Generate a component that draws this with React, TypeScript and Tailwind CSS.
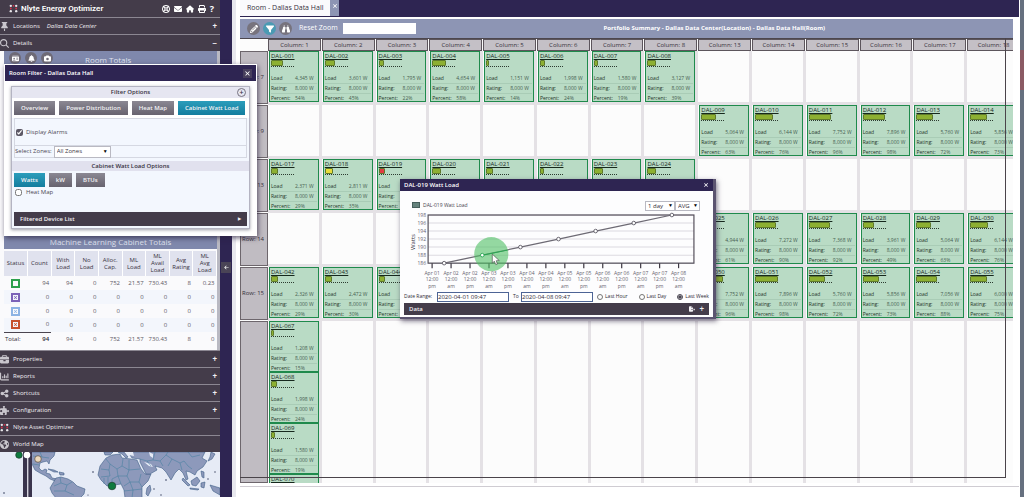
import { useState } from "react";
import type { ReactNode } from "react";
import {
  FaArrowLeft,
  FaBell,
  FaBinoculars,
  FaCamera,
  FaEnvelope,
  FaFileExport,
  FaFilter,
  FaHouse,
  FaIdCard,
  FaLifeRing,
  FaPencil,
  FaPrint,
  FaPuzzlePiece,
  FaBriefcase,
  FaEarthAmericas,
  FaMagnifyingGlass,
  FaChartColumn,
  FaShareNodes,
  FaThumbtack,
  FaXmark,
} from "react-icons/fa6";

interface Cabinet {
  id: string;
  load: string;
  percent: number;
  color?: string;
}

const cab = (id: string, load: string, percent: number, color?: string): Cabinet => ({ id, load, percent, color });

const columns = [1, 2, 3, 4, 5, 6, 7, 8, 13, 14, 15, 16, 17, 18];

const rows: { label: string; cabinets: Record<number, Cabinet> }[] = [
  {
    label: "Row: 7",
    cabinets: {
      1: cab("DAL-001", "4,345", 54),
      2: cab("DAL-002", "3,601", 45),
      3: cab("DAL-003", "1,795", 22),
      4: cab("DAL-004", "4,654", 58),
      5: cab("DAL-005", "1,151", 14),
      6: cab("DAL-006", "1,998", 24),
      7: cab("DAL-007", "1,580", 19),
      8: cab("DAL-008", "3,127", 39),
    },
  },
  {
    label: "Row: 9",
    cabinets: {
      13: cab("DAL-009", "5,064", 63),
      14: cab("DAL-010", "6,144", 76),
      15: cab("DAL-011", "7,752", 96),
      16: cab("DAL-012", "7,896", 98),
      17: cab("DAL-013", "5,760", 72),
      18: cab("DAL-014", "5,856", 73),
    },
  },
  {
    label: "Row: 13",
    cabinets: {
      1: cab("DAL-017", "2,371", 29),
      2: cab("DAL-018", "2,811", 35, "bg-[#e8dc3c]"),
      3: cab("DAL-019", "2,326", 29, "bg-[#e23c42]"),
      4: cab("DAL-020", "3,127", 39),
      5: cab("DAL-021", "2,326", 29),
      6: cab("DAL-022", "1,580", 19),
      7: cab("DAL-023", "3,127", 39),
      8: cab("DAL-024", "2,811", 35),
    },
  },
  {
    label: "Row: 14",
    cabinets: {
      13: cab("DAL-025", "4,944", 61),
      14: cab("DAL-026", "7,272", 90),
      15: cab("DAL-027", "7,368", 92),
      16: cab("DAL-028", "3,961", 49),
      17: cab("DAL-029", "5,064", 63),
      18: cab("DAL-030", "6,144", 76),
    },
  },
  {
    label: "Row: 15",
    cabinets: {
      1: cab("DAL-042", "2,326", 29),
      2: cab("DAL-043", "2,472", 30),
      3: cab("DAL-044", "2,472", 30),
      13: cab("DAL-050", "7,752", 96),
      14: cab("DAL-051", "7,896", 98),
      15: cab("DAL-052", "5,760", 72),
      16: cab("DAL-053", "5,856", 73),
      17: cab("DAL-054", "7,056", 88),
      18: cab("DAL-055", "6,000", 75),
    },
  },
];

const stacked = [
  cab("DAL-067", "1,208", 15),
  cab("DAL-068", "1,998", 24),
  cab("DAL-069", "1,580", 19),
  cab("DAL-070", "3,127", 39),
];

const CabinetCard = ({ cabinet }: { cabinet: Cabinet }) => (
  <div className="h-[51px] overflow-hidden border border-[#1f8a4c] bg-[#b9dbc5] px-px text-[5px] leading-[9px] text-[#1d3326]">
    <a href={`#${cabinet.id}`} className="block text-[6px] leading-[8px] text-[#16281d] underline">
      {cabinet.id}
    </a>
    <div className="h-[7px] w-[23px] border-b border-dotted border-[#2c3b30]">
      <div
        className={`h-[6px] rounded-[1px] border border-[#5f7a2c] ${cabinet.color ?? "bg-[#8db032]"}`}
        style={{ width: `${cabinet.percent}%` }}
      />
    </div>
    <dl className="mt-[7px] grid grid-cols-[24px_1fr] whitespace-nowrap">
      <dt className="border-b border-[#a9ccb6]">Load</dt>
      <dd className="border-b border-[#a9ccb6] text-[#466050]">{cabinet.load} W</dd>
      <dt className="border-b border-[#a9ccb6]">Rating:</dt>
      <dd className="border-b border-[#a9ccb6] text-[#466050]">8,000 W</dd>
      <dt className="leading-[8px]">Percent:</dt>
      <dd className="leading-[8px] text-[#466050]">{cabinet.percent}%</dd>
    </dl>
  </div>
);

const RowHeader = ({ label, tall }: { label: string; tall?: boolean }) => (
  <div
    className={`flex w-[28px] shrink-0 items-center justify-end border border-[#6d666c] bg-[#c0bcc2] pr-[3px] text-[6px] font-medium whitespace-nowrap text-[#35303a] ${tall ? "" : "mb-px h-[53px]"}`}
  >
    {label}
  </div>
);

const RoomPlan = () => (
  <div className="relative min-h-0 flex-1 overflow-hidden bg-[#fcfcfc]">
    <div className="flex h-full w-[781px] flex-col">
      <div className="flex h-[13px] shrink-0 border-t border-[#4d474e]">
        <div className="w-[28px] shrink-0" />
        <div className="grid flex-1 grid-cols-14">
          {columns.map((c) => (
            <div
              key={c}
              className="mr-px border border-[#5c555c] bg-[#c4c0c6] text-center text-[6px] leading-[10px] font-medium text-[#38323c]"
            >
              Column: {c}
            </div>
          ))}
        </div>
      </div>
      {rows.map((row) => (
        <div key={row.label} className="flex h-[54px] shrink-0">
          <RowHeader label={row.label} />
          <div className="grid flex-1 grid-cols-14">
            {columns.map((c) => (
              <div key={c} className="border-r-3 border-b-3 border-[#e4e1e5] pl-px">
                {row.cabinets[c] && <CabinetCard cabinet={row.cabinets[c]} />}
              </div>
            ))}
          </div>
        </div>
      ))}
      <div className="flex min-h-0 flex-1">
        <RowHeader label="" tall />
        <div className="grid flex-1 grid-cols-14">
          {columns.map((c) => (
            <div key={c} className="border-r-3 border-[#e4e1e5] pl-px">
              {c === 1 && stacked.map((s) => <CabinetCard key={s.id} cabinet={s} />)}
            </div>
          ))}
        </div>
      </div>
    </div>
    {/* room outline */}
    <div className="pointer-events-none absolute top-0 right-[7px] bottom-[5px] left-0 border-r border-b border-[#4a444a]" />
  </div>
);

const SectionBar = ({ icon, label, sign, extra }: { icon: ReactNode; label: string; sign?: string; extra?: string }) => (
  <button className="flex h-[17px] w-full shrink-0 items-center border-t border-[#8c8792] bg-[#443c4a] pr-[3px] text-left text-[6px] font-medium text-[#f1eff3]">
    <span className="flex w-[13px] shrink-0 text-[9px] text-[#c9c6cd]">{icon}</span>
    {label}
    {extra && <em className="ml-[7px]">{extra}</em>}
    <span className="ml-auto text-[8px] font-bold">{sign}</span>
  </button>
);

const NlyteMark = () => (
  <svg viewBox="0 0 10 10" className="size-[9px]">
    <g fill="#e9e7ec">
      <circle cx="2" cy="2" r="1.3" />
      <circle cx="8" cy="2" r="1.3" />
      <circle cx="2" cy="8" r="1.3" />
      <circle cx="8" cy="8" r="1.3" />
    </g>
    <circle cx="2" cy="5" r="1" fill="#d8344b" />
    <circle cx="5" cy="2" r="1" fill="#d8344b" />
    <circle cx="8" cy="5" r="1" fill="#d8344b" />
  </svg>
);

const totals: { status: string; values: string[] }[] = [
  { status: "border-[#2da04c] text-transparent", values: ["94", "94", "0", "752", "21.57", "730.43", "8", "0.23"] },
  { status: "border-[#7c63b8] text-[#7c63b8]", values: ["0", "0", "0", "0", "0", "0", "0", "0"] },
  { status: "border-[#8db4e4] text-[#8db4e4]", values: ["0", "0", "0", "0", "0", "0", "0", "0"] },
  { status: "border-[#c8502c] text-[#c8502c]", values: ["0", "0", "0", "0", "0", "0", "0", "0"] },
];

const TotalsTable = () => (
  <table className="w-full table-fixed text-[6px] text-[#5b5763]">
    <thead>
      <tr className="h-[25px] bg-[#e0e2ee] text-[#38323f]">
        {["Status", "Count", "With Load", "No Load", "Alloc. Cap.", "ML Load", "ML Avail Load", "Avg Rating", "ML Avg Load"].map((h) => (
          <th key={h} className="border-r border-white px-[2px] text-center leading-[7px] font-medium">
            {h}
          </th>
        ))}
      </tr>
    </thead>
    <tbody>
      {totals.map((t) => (
        <tr key={t.status} className="h-[14px] even:bg-[#f3f6fc]">
          <td>
            <span className={`ml-[7px] flex size-[9px] items-center justify-center border-2 ${t.status}`}>
              <FaXmark className="size-[5px]" />
            </span>
          </td>
          {t.values.map((v, i) => (
            <td key={i} className="pr-[2px] text-right">
              {v}
            </td>
          ))}
        </tr>
      ))}
      <tr className="h-[15px]">
        <td className="border-t border-[#4b4550] pl-px font-medium text-[#2e2936]">Total:</td>
        <td className="border-t border-[#4b4550] pr-[2px] text-right font-semibold text-[#2e2936]">94</td>
        {["94", "0", "752", "21.57", "730.43", "8", "0"].map((v, i) => (
          <td key={i} className="pr-[2px] text-right">
            {v}
          </td>
        ))}
      </tr>
    </tbody>
  </table>
);

const WorldMap = () => (
  <svg viewBox="0 0 220 45" preserveAspectRatio="xMidYMin slice" className="min-h-0 w-full flex-1 bg-[#e6ebf6]">
    <g fill="#8d99bb" stroke="#3f5f86" strokeWidth="0.6" strokeLinejoin="round">
      {/* north and central america */}
      <path d="M29 0H55L54 4L50 8L49 12L47 9L43 10L40 11L39 16L42 19L45 17L47 18L46 21L50 22L52 26L57 27L55 29L50 27L46 24L40 21L35 18L32 12L29 6Z" />
      <path d="M48 17L54 18L58 20L54 20ZM59 20L64 21L64 23L60 23Z" />
      {/* south america */}
      <path d="M56 26L61 25L68 27L73 30L77 34L85 37L84 42L80 46H56L52 41L50 36L53 31Z" />
      {/* africa */}
      <path d="M106 6L112 3L120 2L122 6L131 7L137 8L141 17L145 22L151 22L148 29L142 35L142 46H125L124 38L121 32L114 33L107 34L101 28L98 23L100 14Z" />
      <path d="M147 36L150 33L151 38L148 44L146 42Z" />
      {/* europe and asia */}
      <path d="M104 0H113L110 3L105 3ZM118 0L124 0L128 5L126 6L122 2ZM128 0H205L202 6L207 9L203 15L197 19L195 23L190 20L186 19L188 27L186 28L183 21L179 17L175 21L171 28L166 20L162 16L155 14L157 18L150 22L146 22L140 10L140 7L132 6Z" />
      <path d="M183 26L190 33L188 34L182 28ZM191 29L197 25L200 29L196 34L192 33ZM190 36L199 37L198 38L190 37ZM201 31L205 30L204 36L201 35ZM210 33L220 36V43L213 39ZM211 0L215 2L212 7L208 9L210 5ZM201 19L204 20L204 26L202 25Z" />
    </g>
    <g fill="#e6ebf6">
      <path d="M126 0H133L134 4L129 3ZM149 0L153 2L153 6L150 4ZM144 10L149 14L153 15L151 12Z" />
    </g>
    <g fill="none" stroke="#3f7c9c" strokeWidth="0.5">
      <path d="M106 7L110 12L117 17L122 14L123 7M122 14L129 18V8M129 18L140 17M101 17L109 18L110 12M109 18L110 24L101 25M117 17L118 24L112 27V33M118 24L127 24L129 18M127 24L130 30L139 30L141 22M130 30L124 34M118 24L121 32M130 30L133 38L142 37M124 39L133 38L132 46M139 30L142 35M104 26V32M108 25V34" />
      <path d="M140 7L147 9L153 8L160 9L163 14M153 8L155 0M160 9L166 3L172 7L180 11L184 9M166 3L168 0M172 7L168 14M180 11L182 18M184 9L188 14L192 17M188 0L192 5L200 3M147 9L151 14" />
      <path d="M60 25L61 31L67 33L72 30M61 31L54 34M67 33L65 39L74 43M54 39L65 39" />
      <path d="M33 12L39 13M40 0L42 5L49 6M33 4L42 5" />
    </g>
    <g fill="#2d3554">
      <circle cx="4" cy="41" r="0.8" />
      <circle cx="93" cy="20" r="0.8" />
      <circle cx="88" cy="43" r="0.6" />
      <circle cx="166" cy="28" r="0.8" />
      <circle cx="154" cy="37" r="0.7" />
      <circle cx="161" cy="43" r="0.7" />
      <circle cx="215" cy="20" r="0.7" />
      <circle cx="208" cy="27" r="0.7" />
    </g>
    {/* zoom slider */}
    <rect x="23" y="0" width="9" height="45" fill="#3a344c" />
    <rect x="27" y="0" width="1.4" height="45" fill="#d6d4de" />
    <circle cx="19" cy="3" r="3.3" fill="#0e7a3e" stroke="#1c3b2c" strokeWidth="0.7" />
    <circle cx="27" cy="3" r="3.3" fill="#fff" />
    <circle cx="38" cy="7" r="3.3" fill="#ecd9bd" stroke="#55493f" strokeWidth="0.7" />
    <circle cx="112" cy="34" r="3.8" fill="#0e7a3e" stroke="#1c3b2c" strokeWidth="0.7" />
  </svg>
);

const Sidebar = () => (
  <aside className="flex w-[232px] shrink-0 bg-[#2e2552]">
    <div className="flex w-[220px] shrink-0 flex-col">
      <header className="flex h-[17px] shrink-0 items-center bg-[#443c4a] pl-[9px] text-white">
        <NlyteMark />
        <h1 className="ml-[3px] font-[Roboto,sans-serif] text-[8px] leading-[14px] font-semibold whitespace-nowrap">
          Nlyte Energy Optimizer
        </h1>
        <nav className="mr-[6px] ml-auto flex items-center gap-[4px] text-[8px]">
          <button aria-label="Support"><FaLifeRing /></button>
          <button aria-label="Mail"><FaEnvelope /></button>
          <button aria-label="Home"><FaHouse /></button>
          <button aria-label="Print"><FaPrint /></button>
          <button aria-label="Help" className="text-[9px] leading-[9px] font-bold">?</button>
        </nav>
      </header>
      <SectionBar icon={<FaThumbtack />} label="Locations" extra="Dallas Data Center" sign="+" />
      <SectionBar icon={<FaMagnifyingGlass />} label="Details" sign="−" />
      <div className="flex shrink-0 basis-[299px] flex-col border-r-3 border-[#b9b9c2] bg-[#fafafc] pl-[4px]">
        <div className="flex h-[184px] shrink-0">
          <div className="flex h-[14px] w-full items-center bg-[#7f88ac] pl-[5px] text-white">
            <div className="flex gap-[4px] text-[7px]">
              <span className="flex size-[12px] items-center justify-center rounded-full bg-[#6e6a76]"><FaIdCard /></span>
              <span className="flex size-[12px] items-center justify-center rounded-full bg-[#6e6a76]"><FaBell /></span>
              <span className="flex size-[12px] items-center justify-center rounded-full bg-[#6e6a76]"><FaCamera /></span>
            </div>
            <h2 className="mt-[4px] ml-[32px] text-[8px] text-[#dfe2ee]">Room Totals</h2>
          </div>
        </div>
        <h2 className="mb-[2px] h-[14px] shrink-0 bg-[#7f88ac] text-center text-[8px] leading-[14px] text-[#dfe2ee]">
          Machine Learning Cabinet Totals
        </h2>
        <TotalsTable />
      </div>
      <SectionBar icon={<FaBriefcase />} label="Properties" sign="+" />
      <SectionBar icon={<FaChartColumn />} label="Reports" sign="+" />
      <SectionBar icon={<FaShareNodes />} label="Shortcuts" sign="+" />
      <SectionBar icon={<FaPuzzlePiece />} label="Configuration" sign="+" />
      <SectionBar icon={<NlyteMark />} label="Nlyte Asset Optimizer" />
      <SectionBar icon={<FaEarthAmericas />} label="World Map" />
      <WorldMap />
    </div>
    <button aria-label="Collapse sidebar" className="mt-[262px] ml-px flex h-[11px] w-[10px] items-center justify-center bg-[#4a4456] text-[5px] text-white">
      <FaArrowLeft />
    </button>
  </aside>
);

const PillButton = ({ label, active, onClick }: { label: string; active?: boolean; onClick?: () => void }) => (
  <button
    onClick={onClick}
    className={`h-[14px] px-[7px] text-[6px] font-semibold whitespace-nowrap text-[#f3f3f6] ${
      active ? "bg-linear-to-b from-[#2b9dbb] to-[#137d9e]" : "bg-linear-to-b from-[#8b8893] to-[#67636f]"
    }`}
  >
    {label}
  </button>
);

const RoomFilter = () => {
  const [tab, setTab] = useState("Cabinet Watt Load");
  const [unit, setUnit] = useState("Watts");

  return (
    <section className="absolute top-[64px] left-[4px] w-[253px] border border-white bg-white pb-[6px] shadow-[1px_2px_5px_rgba(40,30,60,0.7)]">
      <div className="flex h-[16px] items-center bg-[#2e2552] px-[4px] text-[6px] font-semibold text-white">
        <h2>Room Filter - Dallas Data Hall</h2>
        <button aria-label="Close filter" className="ml-auto bg-[#473f5c] p-px text-[7px]"><FaXmark /></button>
      </div>
      <div className="mx-[6px] mt-[5px] border border-[#b4b4c2] bg-[#f3f7fe] pb-[2px] text-[6px] text-[#4c4854] shadow-[0_1px_3px_rgba(60,60,80,0.5)]">
        <div className="relative h-[11px] bg-[#e6e6f1] text-center leading-[11px] font-semibold text-[#37323f]">
          Filter Options
          <button aria-label="Reset filters" className="absolute top-px right-[3px] size-[9px] rounded-full border border-[#777380] text-[7px] leading-[6px]">+</button>
        </div>
        <div className="flex gap-[4px] bg-white px-[2px] py-[3px]">
          {["Overview", "Power Distribution", "Heat Map", "Cabinet Watt Load"].map((t) => (
            <PillButton key={t} label={t} active={tab === t} onClick={() => setTab(t)} />
          ))}
        </div>
        <div className="mx-[2px] border border-[#d5d8e2]">
          <label className="flex h-[26px] items-center gap-[3px] pl-px">
            <input type="checkbox" defaultChecked className="size-[7px] accent-[#5c5866]" />
            Display Alarms
          </label>
          <div className="flex h-[12px] items-center gap-[2px] border-t border-[#d5d8e2]">
            <label htmlFor="zones">Select Zones:</label>
            <div className="relative">
              <select id="zones" className="block h-[12px] w-[57px] appearance-none border border-[#b9b9c2] bg-white pl-[2px] text-[6px] text-[#3a3642]">
                <option>All Zones</option>
              </select>
              <span className="pointer-events-none absolute top-[2px] right-[3px] text-[5px] leading-[7px] text-black">▼</span>
            </div>
          </div>
        </div>
        <h3 className="mt-[3px] h-[10px] bg-[#e1e1ee] text-center leading-[10px] font-semibold text-[#37323f]">Cabinet Watt Load Options</h3>
        <div className="flex gap-[4px] px-[2px] pt-[2px]">
          {["Watts", "kW", "BTUs"].map((u) => (
            <PillButton key={u} label={u} active={unit === u} onClick={() => setUnit(u)} />
          ))}
        </div>
        <label className="flex h-[11px] items-center gap-[4px] pl-[3px]">
          <input type="checkbox" className="size-[7px]" />
          Heat Map
        </label>
        <div className="mt-[14px] px-[2px]">
          <button className="flex h-[14px] w-full items-center justify-between bg-[#443c4a] px-[6px] font-semibold text-[#f1eff3]">
            Filtered Device List
            <span className="text-[4px]">▶</span>
          </button>
        </div>
      </div>
    </section>
  );
};

const points = [
  [445, 262],
  [483, 254],
  [521, 246],
  [559, 238],
  [596, 230],
  [634, 222],
  [672, 214],
];

const days = ["01", "02", "02", "03", "03", "04", "04", "05", "05", "06", "06", "07", "07", "08"];

const LoadChart = () => (
  <svg viewBox="405 210 304 80" className="block w-full text-[5px]" fill="#66636e">
    {[198, 196, 194, 192, 190, 188, 186].map((v, i) => (
      <g key={v}>
        <line x1="429" x2="694" y1={214 + i * 8} y2={214 + i * 8} stroke="#dcdae0" />
        <text x="427" y={216 + i * 8} textAnchor="end">{v}</text>
      </g>
    ))}
    <rect x="429" y="214" width="265" height="48" fill="none" stroke="#56515c" strokeWidth="1.2" />
    <text x="0" y="0" transform="translate(416 249) rotate(-90)" fontSize="6" fill="#2f2b36">Watts</text>
    {days.map((d, i) => {
      const x = 433 + i * 18.9;
      return (
        <g key={i} textAnchor="middle">
          <line x1={x} x2={x} y1="262" y2="267" stroke="#3d3843" strokeWidth="1.2" />
          <text x={x} y="274">Apr {d}</text>
          <text x={x} y="280">12:00</text>
          <text x={x} y="287">{i % 2 ? "am" : "pm"}</text>
        </g>
      );
    })}
    <polyline points={points.map((p) => p.join(",")).join(" ")} fill="none" stroke="#6d6a74" strokeWidth="1.2" />
    <circle cx="492" cy="253" r="17" fill="#4fbf62" fillOpacity="0.6" />
    <path d="M483 254L508 249" stroke="#27a552" />
    {points.map(([x, y]) => (
      <circle key={x} cx={x} cy={y} r="1.8" fill="#fff" stroke={x === 483 ? "#27a552" : "#5d5a65"} strokeWidth="0.9" />
    ))}
    <path d="M493 253V262L495 260L496.500 263.500L498 263L497 259.500H500Z" fill="#fff" stroke="#444" strokeWidth="0.6" />
  </svg>
);

const WattLoadDialog = () => (
  <section className="absolute top-[179px] left-[400px] w-[316px] border-r-3 border-b-2 border-[#5b5470] bg-[#fdfdfe] pb-[2px] text-[5px] text-[#45414c] shadow-[1px_2px_5px_rgba(40,30,60,0.6)]">
    <div className="flex h-[12px] items-center bg-[#2e2552] px-[4px] text-[6px] font-semibold text-white">
      <h2>DAL-019 Watt Load</h2>
      <button aria-label="Close chart" className="ml-auto text-[6px]"><FaXmark /></button>
    </div>
    <div className="px-[4px]">
      <div className="flex h-[20px] items-end pr-[9px] pl-[8px]">
        <span className="mb-[3px] h-[6px] w-[8px] border border-[#465f5c] bg-[#66837d]" />
        <span className="mb-[2px] ml-[3px] leading-[8px]">DAL-019 Watt Load</span>
        <div className="relative ml-auto">
          <select aria-label="Interval" className="block h-[10px] w-[30px] appearance-none border border-[#b9b9c2] bg-white pl-[2px] text-[6px] text-[#2f2b36]">
            <option>1 day</option>
          </select>
          <span className="pointer-events-none absolute top-px right-[2px] leading-[7px] text-black">▼</span>
        </div>
        <div className="relative">
          <select aria-label="Aggregate" className="block h-[10px] w-[25px] appearance-none border border-[#b9b9c2] bg-white pl-[2px] text-[6px] text-[#2f2b36]">
            <option>AVG</option>
          </select>
          <span className="pointer-events-none absolute top-px right-[2px] leading-[7px] text-black">▼</span>
        </div>
      </div>
      <LoadChart />
      <div className="flex h-[11px] items-center whitespace-nowrap text-[#2f2b36]">
        <label htmlFor="from" className="w-[33px]">Date Range:</label>
        <input id="from" defaultValue="2020-04-01 09:47" className="h-[10px] w-[72px] border border-[#4d6495] bg-white text-[6px]" />
        <label htmlFor="to" className="ml-[4px] w-[8px]">To</label>
        <input id="to" defaultValue="2020-04-08 09:47" className="h-[10px] w-[72px] border border-[#4d6495] bg-white text-[6px]" />
        <div className="ml-[4px] flex flex-1 justify-between">
          {["Last Hour", "Last Day", "Last Week"].map((r) => (
            <label key={r} className="flex items-center gap-[2px]">
              <input type="radio" name="range" defaultChecked={r === "Last Week"} className="size-[6px] accent-[#4a4652]" />
              {r}
            </label>
          ))}
        </div>
      </div>
      <button className="mt-px flex h-[12px] w-full items-center bg-[#443c4a] px-[5px] text-[6px] font-semibold text-[#f1eff3]">
        Data
        <FaFileExport className="ml-auto size-[6px]" />
        <span className="ml-[4px] text-[8px] leading-[8px]">+</span>
      </button>
    </div>
  </section>
);

const Toolbar = () => (
  <div className="flex h-[19px] shrink-0 items-center bg-[#8d95b4] pl-[7px] text-[7px] text-white">
    <div className="flex gap-[3px]">
      <button aria-label="Edit" className="flex size-[13px] items-center justify-center rounded-full bg-[#77737d] text-[8px]"><FaPencil /></button>
      <button aria-label="Filter" className="flex size-[13px] items-center justify-center rounded-full bg-[#4b9ab3] text-[8px]"><FaFilter /></button>
      <button aria-label="Find" className="flex size-[13px] items-center justify-center rounded-full bg-[#77737d] text-[8px]"><FaBinoculars /></button>
    </div>
    <button className="ml-[7px]">Reset Zoom</button>
    <input aria-label="Search" className="ml-[5px] h-[11px] w-[73px] bg-white text-[6px] text-[#333]" />
    <h2 className="flex-1 text-center text-[6px] font-bold">
      Portfolio Summary - Dallas Data Center(Location) - Dallas Data Hall(Room)
    </h2>
  </div>
);

const App = () => {
  return (
    <div className="relative flex h-screen overflow-hidden bg-white font-['Open_Sans',sans-serif]">
      <Sidebar />
      <main className="flex min-w-0 flex-1 flex-col border-l-4 border-[#e8e8ee] pb-[10px] pl-[4px]">
        <div className="mr-px flex h-[17px] shrink-0 bg-[#2e2552]">
          <button className="h-[16px] bg-[#fafafc] px-[7px] text-[7px] whitespace-nowrap text-[#35303c]">Room - Dallas Data Hall</button>
          <button aria-label="Close tab" className="flex h-[16px] w-[9px] justify-center bg-[#8d95b4] pt-[3px] text-[6px] text-white"><FaXmark /></button>
        </div>
        <div className="mt-px mr-px flex min-h-0 flex-1 flex-col border-b border-[#cfccd2] pt-px pr-[6px] pb-[3px]">
          <Toolbar />
          <RoomPlan />
        </div>
      </main>
      <div className="flex w-[4px] shrink-0 flex-col bg-[#66707f]">
        <div className="mt-[50px] h-[40px] bg-[#8b5a64]" />
      </div>
      <RoomFilter />
      <WattLoadDialog />
    </div>
  );
};

export default App;
